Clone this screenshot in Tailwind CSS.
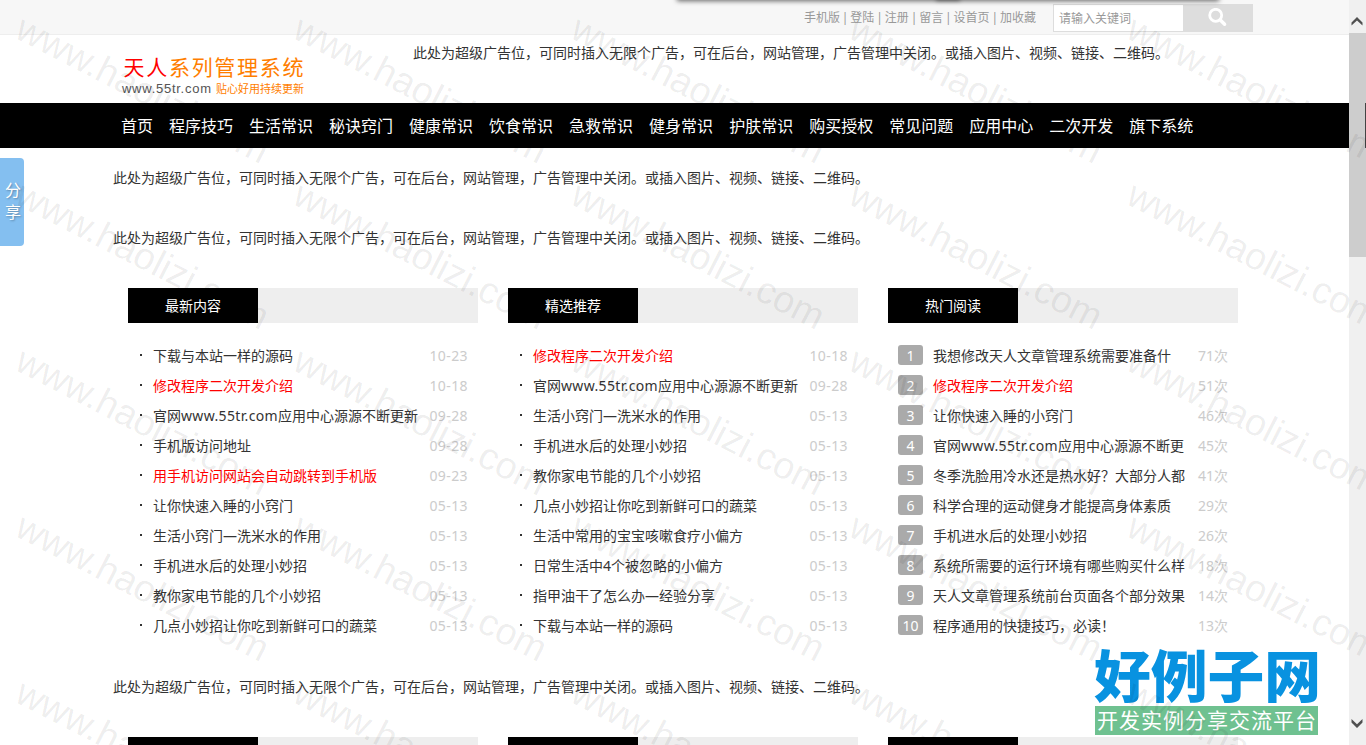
<!DOCTYPE html>
<html lang="zh-CN">
<head>
    <meta charset="UTF-8">
    <meta name="viewport" content="width=device-width, initial-scale=1.0">
    <title>天人系列管理系统</title>
    <script src="https://cdn.jsdelivr.net/npm/@tailwindcss/browser@4"></script>
    <style>
        body {
            font-family: 'Noto Sans', 'Noto Sans CJK SC', sans-serif;
        }
    </style>
</head>
<body class="relative flex h-[745px] overflow-hidden bg-white text-sm text-[#333]">
    <div class="w-[1349px] shrink-0">
        <!-- Top bar -->
        <div class="h-[35px] border-b border-[#eee] bg-[#f7f7f7]">
            <div class="ml-[113px] flex w-[1140px] justify-end">
                <div class="mr-[17px] flex gap-[1.9px] text-xs leading-[35px] text-[#999]">
                    <a>手机版</a><span>|</span><a>登陆</a><span>|</span><a>注册</a><span>|</span><a>留言</a><span>|</span><a>设首页</a><span>|</span><a>加收藏</a>
                </div>
                <div class="mt-1 flex h-7">
                    <div class="w-[130px] border border-r-0 border-[#ddd] bg-white pl-[5px] text-xs leading-[28px] text-[#999]">请输入关键词</div>
                    <div class="flex w-[70px] justify-center bg-[#ddd] pt-1">
                        <svg width="20" height="20" viewBox="0 0 20 20" fill="none" stroke="#fff">
                            <circle cx="7.7" cy="7.3" r="6" stroke-width="2.8"/>
                            <path d="M12.3 12L16.6 16.3" stroke-width="3.4" stroke-linecap="round"/>
                        </svg>
                    </div>
                </div>
            </div>
        </div>

        <!-- Logo and header ad -->
        <header class="ml-[113px] flex h-[68px] w-[1140px]">
            <svg class="w-[300px] shrink-0" width="300" height="68">
                <text x="10.5" y="39.5" font-size="21" font-weight="400" textLength="180" fill="#ff7e00"><tspan fill="#f00">天人</tspan>系列管理系统</text>
                <text x="9" y="58" font-size="13" textLength="89" fill="#555" font-family="'Liberation Sans Narrow', 'Liberation Sans'">www.55tr.com</text>
                <text x="103" y="58" font-size="11" textLength="88" fill="#ff7e00">贴心好用持续更新</text>
            </svg>
            <p class="pt-2 leading-5">此处为超级广告位，可同时插入无限个广告，可在后台，网站管理，广告管理中关闭。或插入图片、视频、链接、二维码。</p>
        </header>

        <nav class="h-[45px] bg-black">
            <div id="nav" class="ml-[113px] flex w-[1140px] text-base leading-[46px] text-white"></div>
        </nav>

        <main class="ml-[113px] w-[1140px]">
            <p class="h-[60px] leading-[60px]">此处为超级广告位，可同时插入无限个广告，可在后台，网站管理，广告管理中关闭。或插入图片、视频、链接、二维码。</p>
            <p class="h-[60px] leading-[60px]">此处为超级广告位，可同时插入无限个广告，可在后台，网站管理，广告管理中关闭。或插入图片、视频、链接、二维码。</p>
            <div id="columns" class="mt-5 flex"></div>
            <p class="mt-4 h-[60px] leading-[60px]">此处为超级广告位，可同时插入无限个广告，可在后台，网站管理，广告管理中关闭。或插入图片、视频、链接、二维码。</p>
            <div class="mt-5 flex">
                <div class="mx-[15px] h-[35px] w-[350px] bg-[#eee]"><div class="h-full w-[130px] bg-black"></div></div>
                <div class="mx-[15px] h-[35px] w-[350px] bg-[#eee]"><div class="h-full w-[130px] bg-black"></div></div>
                <div class="mx-[15px] h-[35px] w-[350px] bg-[#eee]"><div class="h-full w-[130px] bg-black"></div></div>
            </div>
        </main>
    </div>

    <!-- Scrollbar -->
    <div class="flex h-[745px] w-[17px] shrink-0 flex-col bg-[#f0f0f0]">
        <svg class="h-[33px] w-[17px] shrink-0" viewBox="0 0 17 33" fill="#505050"><path d="M2.5 25.5V22.5L8 17L13.5 22.5V25.5L8 20.5Z"/></svg>
        <div class="h-[224px] bg-[#cdcdcd]"></div>
        <svg class="mt-auto h-[45px] w-[17px] shrink-0" viewBox="0 0 17 45" fill="#505050"><path d="M2.5 19V22.5L8 28L13.5 22.5V19L8 24.3Z"/></svg>
    </div>
    <div class="absolute top-[103px] right-0 h-[45px] w-px bg-[#444]"></div>

    <!-- Shadow of the panel above the page -->
    <div class="absolute top-[-10px] left-[678px] h-[10px] w-[540px] bg-[#777] shadow-[0_0_5px_1px_rgba(0,0,0,0.6)]"></div>
    <div class="absolute top-[-10px] left-[937px] h-[10px] w-[22px] shadow-[0_0_4px_1px_rgba(0,0,0,0.4)]"></div>

    <!-- Share tab -->
    <div class="absolute top-[158px] left-0 h-[88px] w-6 rounded-r bg-[#84bff0] pt-[21px] pl-[5px] text-base leading-[22px] text-white [text-shadow:1px_1px_2px_rgba(0,0,0,0.3)]">分<br>享</div>

    <!-- Site badge -->
    <svg class="absolute top-[640px] left-[1090px]" width="240" height="100">
        <text x="4" y="57" font-size="56" font-weight="900" textLength="227" lengthAdjust="spacingAndGlyphs" fill="#0892e0">好例子网</text>
        <rect x="5" y="66" width="223" height="29" fill="#6fc190"/>
        <text x="7" y="87.5" font-size="21" textLength="219" fill="#fff" font-weight="400">开发实例分享交流平台</text>
    </svg>

    <!-- Watermark -->
    <svg class="pointer-events-none absolute top-0 left-0" width="1366" height="745">
        <g id="watermark" fill="#000" fill-opacity="0.075" font-family="Liberation Sans" font-size="37.7"></g>
    </svg>

    <script>
        const navItems = ['首页', '程序技巧', '生活常识', '秘诀窍门', '健康常识', '饮食常识', '急救常识', '健身常识', '护肤常识', '购买授权', '常见问题', '应用中心', '二次开发', '旗下系统'];

        // Titles that start with * are highlighted
        const columns = [
            { title: '最新内容', items: [
                ['下载与本站一样的源码', '10-23'],
                ['*修改程序二次开发介绍', '10-18'],
                ['官网www.55tr.com应用中心源源不断更新', '09-28'],
                ['手机版访问地址', '09-28'],
                ['*用手机访问网站会自动跳转到手机版', '09-23'],
                ['让你快速入睡的小窍门', '05-13'],
                ['生活小窍门—洗米水的作用', '05-13'],
                ['手机进水后的处理小妙招', '05-13'],
                ['教你家电节能的几个小妙招', '05-13'],
                ['几点小妙招让你吃到新鲜可口的蔬菜', '05-13']
            ] },
            { title: '精选推荐', items: [
                ['*修改程序二次开发介绍', '10-18'],
                ['官网www.55tr.com应用中心源源不断更新', '09-28'],
                ['生活小窍门—洗米水的作用', '05-13'],
                ['手机进水后的处理小妙招', '05-13'],
                ['教你家电节能的几个小妙招', '05-13'],
                ['几点小妙招让你吃到新鲜可口的蔬菜', '05-13'],
                ['生活中常用的宝宝咳嗽食疗小偏方', '05-13'],
                ['日常生活中4个被忽略的小偏方', '05-13'],
                ['指甲油干了怎么办—经验分享', '05-13'],
                ['下载与本站一样的源码', '05-13']
            ] },
            { title: '热门阅读', ranked: true, items: [
                ['我想修改天人文章管理系统需要准备什', '71次'],
                ['*修改程序二次开发介绍', '51次'],
                ['让你快速入睡的小窍门', '46次'],
                ['官网www.55tr.com应用中心源源不断更', '45次'],
                ['冬季洗脸用冷水还是热水好？大部分人都', '41次'],
                ['科学合理的运动健身才能提高身体素质', '29次'],
                ['手机进水后的处理小妙招', '26次'],
                ['系统所需要的运行环境有哪些购买什么样', '18次'],
                ['天人文章管理系统前台页面各个部分效果', '14次'],
                ['程序通用的快捷技巧，必读！', '13次']
            ] }
        ];

        document.getElementById('nav').innerHTML = navItems.map(name => `<a class="px-2">${name}</a>`).join('');

        function renderRow(item, index, ranked) {
            const hot = item[0].startsWith('*');
            const title = item[0].replace('*', '').replace('www.55tr.com', '<span class="tracking-[0.35px]">www.55tr.com</span>');
            const mark = ranked
                ? `<span class="mr-[10px] h-5 w-[25px] -translate-y-px rounded-[3px] bg-[#aaa] text-center leading-[21px] text-white">${index + 1}</span>`
                : `<span class="mr-[11px] ml-[2px] h-[2px] w-[2px] -translate-y-px bg-[#333]"></span>`;
            return `
                <li class="flex h-[30px] items-center">
                    ${mark}
                    <span class="whitespace-nowrap ${hot ? 'text-[#f00]' : ''}">${title}</span>
                    <span class="ml-auto text-[#ccc] ${ranked ? '' : 'tracking-[0.4px]'}">${item[1]}</span>
                </li>
            `;
        }

        document.getElementById('columns').innerHTML = columns.map(col => `
            <section class="mx-[15px] w-[350px]">
                <div class="h-[35px] bg-[#eee]">
                    <h2 class="w-[130px] bg-black text-center leading-[35px] text-white">${col.title}</h2>
                </div>
                <ul class="mt-[18px] px-[10px]">${col.items.map((item, i) => renderRow(item, i, col.ranked)).join('')}</ul>
            </section>
        `).join('');

        let marks = '';
        for (let row = 0; row < 5; row++) {
            for (let col = 0; col < 5; col++) {
                marks += `<text transform="translate(${13 + col * 277.8} ${37 + row * 166}) rotate(27.2)">www.haolizi.com</text>`;
            }
        }
        document.getElementById('watermark').innerHTML = marks;
    </script>
</body>
</html>
